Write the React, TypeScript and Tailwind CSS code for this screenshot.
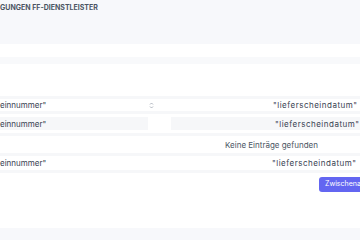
import React from 'react';

export default function App() {
  return (
    <div className="w-[360px] h-[240px] overflow-hidden bg-white text-[8px] text-[#374151] flex flex-col" style={{ fontFamily: 'Inter, "Noto Sans", sans-serif' }}>
      {/* page header */}
      <div className="h-[44px] shrink-0 bg-[#f7f8fb] pt-[3px]">
        <h2 className="text-[7px] font-bold uppercase text-[#4b5563] whitespace-nowrap">
          GUNGEN FF-DIENSTLEISTER
        </h2>
      </div>

      <div className="h-[13px] shrink-0" />
      <div className="h-[7px] shrink-0 bg-[#f8f9fb]" />
      <div className="h-[32px] shrink-0" />

      {/* table */}
      <div className="border-t-[3px] border-[#f6f7f9] shrink-0">
        {/* column headers */}
        <div className="flex items-center h-[12px] whitespace-nowrap">
          <div className="w-[148px] shrink-0 flex items-center justify-between">
            <span>einnummer"</span>
            <svg width="5" height="7" viewBox="0 0 10 14" className="mr-[-6px] text-[#9ca3af]" fill="none" stroke="currentColor" strokeWidth="1.6">
              <path d="M2 5l3-3 3 3" />
              <path d="M2 9l3 3 3-3" />
            </svg>
          </div>
          <div className="flex-1 pl-[125px] tracking-[0.5px]">"lieferscheindatum"</div>
        </div>

        {/* filter inputs */}
        <div className="border-t-[3px] border-[#f6f7f9] flex items-center gap-[23px] h-[22px] whitespace-nowrap">
          <div className="w-[148px] shrink-0 h-[13px] bg-[#f6f7f9] flex items-center">einnummer"</div>
          <div className="flex-1 h-[13px] bg-[#f6f7f9] flex items-center pl-[104px] tracking-[0.5px]">"lieferscheindatum"</div>
        </div>

        {/* empty state */}
        <div className="border-t-[3px] border-[#f6f7f9] h-[20px] flex items-center pl-[225px] text-[#4b5563] whitespace-nowrap">
          Keine Einträge gefunden
        </div>

        {/* summary row */}
        <div className="border-t-[3px] border-[#f6f7f9] border-b-[3px] flex items-center h-[20px] whitespace-nowrap">
          <div className="w-[148px] shrink-0">einnummer"</div>
          <div className="flex-1 pl-[124px] tracking-[0.5px]">"lieferscheindatum"</div>
        </div>
      </div>

      <div className="flex justify-end mt-[4px] mr-[-12px] shrink-0">
        <button className="h-[15px] w-[53px] rounded-[3px] bg-[#6366f1] text-white text-[7px] pl-[6px] text-left whitespace-nowrap overflow-hidden">
          Zwischenablage
        </button>
      </div>

      <div className="flex-1" />
      <div className="h-[12px] shrink-0 bg-[#f7f8fb]" />
    </div>
  );
}
